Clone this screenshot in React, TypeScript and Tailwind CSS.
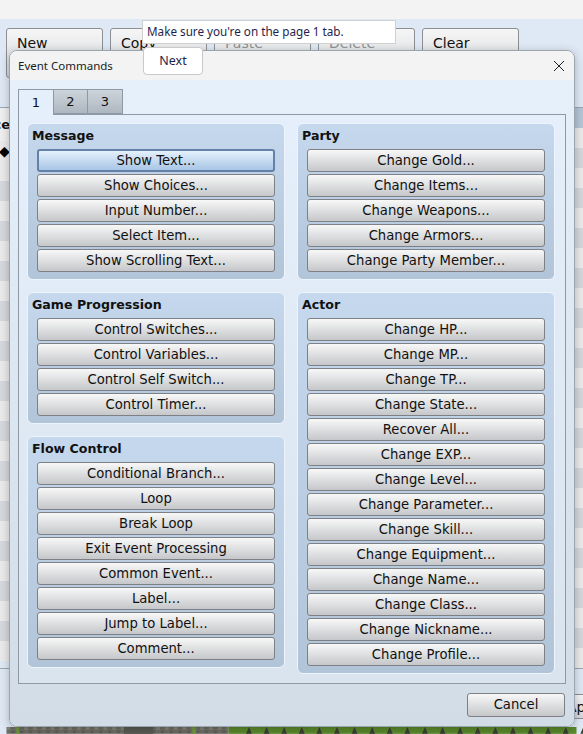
import React from "react";

const message = ["Show Text...", "Show Choices...", "Input Number...", "Select Item...", "Show Scrolling Text..."];
const gameProg = ["Control Switches...", "Control Variables...", "Control Self Switch...", "Control Timer..."];
const flow = ["Conditional Branch...", "Loop", "Break Loop", "Exit Event Processing", "Common Event...", "Label...", "Jump to Label...", "Comment..."];
const party = ["Change Gold...", "Change Items...", "Change Weapons...", "Change Armors...", "Change Party Member..."];
const actor = [
  "Change HP...", "Change MP...", "Change TP...", "Change State...", "Recover All...", "Change EXP...", "Change Level...",
  "Change Parameter...", "Change Skill...", "Change Equipment...", "Change Name...", "Change Class...", "Change Nickname...", "Change Profile...",
];

const dv = { fontFamily: '"DejaVu Sans", Verdana, sans-serif' } as React.CSSProperties;
const ui = { fontFamily: '"Noto Sans", "Open Sans", sans-serif' } as React.CSSProperties;

function CmdButton({ label, active }: { label: string; active?: boolean }) {
  return active ? (
    <div className="flex h-[23px] w-full items-center justify-center rounded-[3px] border-2 border-[#6482a8] bg-linear-to-b from-[#e4f0fc] to-[#a8c6e6] text-[13.2px] text-[#111]">
      {label}
    </div>
  ) : (
    <div className="flex h-[23px] w-full items-center justify-center rounded-[3px] border border-[#7d8084] bg-linear-to-b from-[#f8f8f8] to-[#c5c7ca] text-[13.2px] text-[#111]">
      {label}
    </div>
  );
}

function Group({ title, items, activeFirst }: { title: string; items: string[]; activeFirst?: boolean }) {
  return (
    <div className="w-[258px] rounded-[6px] border border-[#eef4fb] bg-linear-to-b from-[#c5d8ed] to-[#b2c4d8] px-[9px] pb-[7px] pt-[3px]">
      <div className="-ml-[5px] mb-[3px] flex h-[19px] items-center text-[12.6px] font-bold text-[#111]">{title}</div>
      <div className="flex flex-col gap-[2px]">
        {items.map((it, i) => (
          <CmdButton key={it} label={it} active={activeFirst && i === 0} />
        ))}
      </div>
    </div>
  );
}

function ToolButton({ label, disabled }: { label: string; disabled?: boolean }) {
  return (
    <div
      className={
        "h-[50px] w-[97px] rounded-[3px] border border-[#8c8f93] bg-linear-to-b from-[#f6f6f6] to-[#d3d6da] pl-[10px] pt-[4px] text-[14px] " +
        (disabled ? "text-[#8e9196]" : "text-[#111]")
      }
    >
      {label}
    </div>
  );
}

function Rows({ count }: { count: number }) {
  return (
    <>
      {Array.from({ length: count }).map((_, i) => (
        <div key={i} className={"h-[20px] " + (i % 2 === 0 ? "bg-[#ebebeb]" : "bg-[#d5d8dc]")} />
      ))}
    </>
  );
}

function TileStrip() {
  const spikes = Array.from({ length: 20 });
  return (
    <svg width="583" height="7" viewBox="0 0 583 7" className="block">
      <defs>
        <pattern id="st" width="9" height="7" patternUnits="userSpaceOnUse">
          <rect width="4" height="3" fill="#9a9a90" />
          <rect x="5" y="4" width="3" height="2" fill="#4a4a44" />
        </pattern>
      </defs>
      <rect x="0" y="0" width="227" height="7" fill="#6e6e66" />
      <rect x="0" y="0" width="227" height="7" fill="url(#st)" opacity="0.5" />
      <rect x="10" y="0" width="3" height="7" fill="#6f9a3a" />
      <rect x="190" y="0" width="4" height="7" fill="#6f9a3a" />
      <rect x="120" y="0" width="30" height="7" fill="#5a5a55" />
      <rect x="227" y="0" width="356" height="7" fill="#5b8a2c" />
      {spikes.map((_, i) => (
        <polygon key={i} points={`${245 + i * 18},7 ${248 + i * 18},0 ${251 + i * 18},7`} fill="#3b3f36" />
      ))}
    </svg>
  );
}

export default function App() {
  return (
    <div className="relative h-[734px] w-[583px] overflow-hidden bg-[#dfe9f5]" style={dv}>
      {/* Background application */}
      <div className="flex h-full flex-col">
        <div className="h-[19px] bg-[#f3f3f3]" />
        <div className="flex h-[90px] gap-[7px] pl-[6px] pt-[9px]">
          <ToolButton label="New" />
          <ToolButton label="Copy" />
          <ToolButton label="Paste" disabled />
          <ToolButton label="Delete" disabled />
          <ToolButton label="Clear" />
        </div>
        <div className="flex flex-1 border-t border-[#9aa6b2]">
          <div className="flex w-[10px] flex-col overflow-hidden">
            <div className="flex h-[33px] items-center justify-end bg-[#f0f0f0] text-[13px] font-bold text-[#111]">
              <span className="whitespace-nowrap">Choice</span>
            </div>
            <div className="relative h-[20px] bg-[#ebebeb]">
              <span className="absolute -left-[1px] top-[3px] text-[14px] leading-[14px] text-black">◆</span>
            </div>
            <Rows count={25} />
          </div>
          <div className="flex-1" />
          <div className="flex w-[10px] flex-col">
            <div className="h-[20px] bg-[#b6c6d7]" />
            <Rows count={27} />
          </div>
        </div>
        <div className="flex h-[60px] gap-[7px] border-t border-[#9aa6b2] pl-[348px] pt-[25px]">
          <div className="h-[25px] w-[97px] shrink-0 rounded-[3px] border border-[#8c8f93] bg-linear-to-b from-[#f6f6f6] to-[#d3d6da]" />
          <div className="h-[25px] w-[97px] shrink-0 rounded-[3px] border border-[#8c8f93] bg-linear-to-b from-[#f6f6f6] to-[#d3d6da]" />
          <div className="h-[25px] w-[97px] shrink-0 overflow-hidden rounded-[3px] border border-[#8c8f93] bg-linear-to-b from-[#f6f6f6] to-[#d3d6da] pl-[10px] pt-[2px] text-[14px] text-[#111]">
            Apply
          </div>
        </div>
        <TileStrip />
      </div>

      {/* Dialog window */}
      <div className="absolute left-[9px] top-[50px] flex h-[677px] w-[566px] flex-col overflow-hidden rounded-[8px] border border-[#9ba5b0] shadow-[0_2px_10px_rgba(0,0,0,0.25)]">
        <div className="flex h-[29px] shrink-0 items-center justify-between bg-[#f3f3f3] pl-[8px] pr-[9px]" style={ui}>
          <span className="text-[11.5px] text-[#1b1b1b]">Event Commands</span>
          <svg width="12" height="12" viewBox="0 0 12 12">
            <path d="M1 1 L11 11 M11 1 L1 11" stroke="#222" strokeWidth="1" />
          </svg>
        </div>
        <div className="flex flex-1 flex-col bg-linear-to-b from-[#e6f0fb] to-[#d2dce6] px-[8px] pb-[9px] pt-[9px]">
          {/* Tabs */}
          <div className="flex h-[25px] items-end">
            <div className="relative z-10 -mb-px flex h-[26px] w-[36px] items-center justify-center border border-b-0 border-[#8d99a5] bg-[#e5effb] text-[13px] text-[#111]">
              1
            </div>
            <div className="flex h-[25px] w-[34px] items-center justify-center border border-l-0 border-[#8d99a5] bg-linear-to-b from-[#cdd4db] to-[#aeb7c0] text-[13px] text-[#111]">
              2
            </div>
            <div className="flex h-[25px] w-[35px] items-center justify-center border border-l-0 border-[#8d99a5] bg-linear-to-b from-[#cdd4db] to-[#aeb7c0] text-[13px] text-[#111]">
              3
            </div>
          </div>
          {/* Panel */}
          <div className="flex h-[570px] gap-[12px] border border-[#8d99a5] bg-linear-to-b from-[#e5effb] to-[#d9e4ef] pl-[8px] pr-[10px] pt-[8px]">
            <div className="flex flex-col gap-[12px]">
              <Group title="Message" items={message} activeFirst />
              <Group title="Game Progression" items={gameProg} />
              <Group title="Flow Control" items={flow} />
            </div>
            <div className="flex flex-col gap-[12px]">
              <Group title="Party" items={party} />
              <Group title="Actor" items={actor} />
            </div>
          </div>
          <div className="mt-[9px] flex justify-end pr-[1px]">
            <div className="flex h-[24px] w-[98px] items-center justify-center rounded-[3px] border border-[#7d8084] bg-linear-to-b from-[#f8f8f8] to-[#c5c7ca] text-[13.2px] text-[#111]">
              Cancel
            </div>
          </div>
        </div>
      </div>

      {/* Tooltip and Next */}
      <div
        className="absolute left-[142px] top-[20px] flex h-[24px] w-[254px] items-center border border-[#d0d0d0] bg-white pl-[4px] text-[11.7px] text-[#1f1f4d]"
        style={ui}
      >
        Make sure you're on the page 1 tab.
      </div>
      <div
        className="absolute left-[143px] top-[47px] flex h-[28px] w-[60px] items-center justify-center rounded-[4px] border border-[#c9c9c9] bg-white text-[12.5px] text-[#1f1f4d]"
        style={ui}
      >
        Next
      </div>
    </div>
  );
}
